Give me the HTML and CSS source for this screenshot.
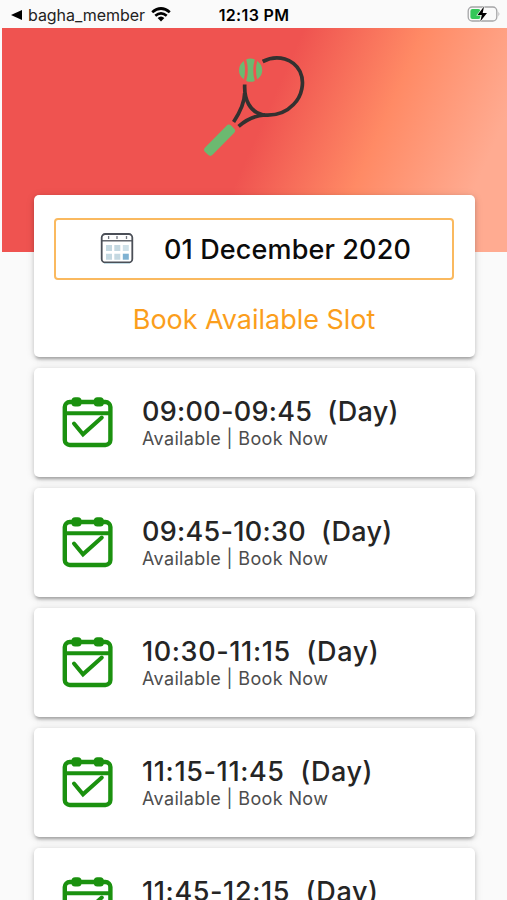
FILE: index.html
```html
<!DOCTYPE html>
<html lang="en">
<head>
<meta charset="utf-8">
<title>Book a slot</title>
<link rel="stylesheet" href="styles.css">
</head>
<body>
<svg class="defs" width="0" height="0" aria-hidden="true">
  <symbol id="booked" viewBox="0 0 52 52">
    <rect x="2.8" y="6" width="45.600" height="43" rx="5" fill="none" stroke="currentColor" stroke-width="4.4"/>
    <path d="M3 17.2H49" stroke="currentColor" stroke-width="4"/>
    <rect x="9.5" y="1.2" width="10" height="9.400" rx="3.6" fill="currentColor"/>
    <rect x="31.800" y="1.2" width="10" height="9.400" rx="3.6" fill="currentColor"/>
    <path d="M12 27.500L21 38.300L39.800 21.500" fill="none" stroke="currentColor" stroke-width="4" stroke-linecap="round" stroke-linejoin="miter"/>
  </symbol>
</svg>
<header class="status">
  <div class="status-left">
    <svg class="back" viewBox="0 0 11 10"><path d="M0 5L11 0V10Z"/></svg>
    <span class="app">bagha_member</span>
    <svg class="wifi" viewBox="0 0 20 15"><path d="M1.2 5.3Q10-2.3 18.8 5.3M4.3 8.7Q10 3.9 15.7 8.7" fill="none" stroke="#000" stroke-width="2.7"/><path d="M6.6 11.1Q10 8.1 13.4 11.1L10 14.6Z"/></svg>
  </div>
  <span class="clock">12:13 PM</span>
  <svg class="battery" viewBox="0 0 34 18">
    <rect x="1.2" y="2" width="28.6" height="14" rx="4" fill="none" stroke="#a5a5a7" stroke-width="1.3"/>
    <path d="M31.5 6.5Q33.3 9 31.5 11.500Z" fill="#a5a5a7"/>
    <rect x="3.4" y="4" width="10" height="10" rx="2" fill="#34c759"/>
    <path d="M17 1.500L10.500 10H14.800L13.300 16.500L20 8H15.700Z" stroke="#fafafa" stroke-width="1.200" paint-order="stroke"/>
  </svg>
</header>
<section class="hero">
  <svg class="racket" viewBox="200 50 110 112">
    <g fill="none" stroke="#333130" stroke-width="3.7">
      <path d="M263.700 61.500C279 53.500 295 59.500 301 71.500C306 82 303 96.500 294.500 104.500C286 113.500 275 116 263.500 114.800C251 111.500 245 100 245.700 84.500"/>
      <path d="M245.700 93C245.500 103 240.500 113 234.600 122"/>
      <path d="M239.600 126.300C247 120 256.500 115.500 266 114.800"/>
    </g>
    <g fill="#6cb970">
      <rect x="202" y="135" width="37" height="10.500" rx="3.200" transform="rotate(-45.500 220.500 140.200)"/>
      <path d="M247.200 59.400Q251.500 57.700 255.800 59.400Q252.600 70 255.800 80.900Q251.500 82.600 247.200 80.900Q250.400 70 247.200 59.400Z"/>
      <path d="M244.800 61Q240 64.500 240 70.200Q240 76 244.800 79.200Q247.200 70 244.800 61Z"/>
      <path d="M258.200 61Q263.200 64.500 263.200 70.200Q263.200 76 258.200 79.200Q255.800 70 258.200 61Z"/>
    </g>
  </svg>
</section>
<main class="content">
  <section class="card picker">
    <div class="date-box">
      <svg class="cal" viewBox="0 0 34 34">
        <rect x="1.700" y="2" width="30.600" height="28.500" rx="3.500" fill="#fff" stroke="#4b4f57" stroke-width="1.800"/>
        <path d="M2 8.800H32" stroke="#4b4f57" stroke-width="1.300"/>
        <path d="M4 31.500H30" stroke="#c3dbe4" stroke-width="1"/>
        <path d="M8.600 4V7M17 4V7M26.500 4V7" stroke="#737780" stroke-width="1.300"/>
        <path d="M6 13h6v6h-6zM14.300 13h6v6h-6zM6 21.700h6v6h-6zM14.300 21.700h6v6h-6z" fill="#c4d8e1"/>
        <path d="M22.800 13h6v6h-6z" fill="#cfe1e9"/>
        <path d="M22.800 21.700h6v6h-6z" fill="#7fb2d2"/>
      </svg>
      <span class="date">01 December 2020</span>
    </div>
    <h1 class="title">Book Available Slot</h1>
  </section>
  <article class="card slot"><svg class="icon"><use href="#booked"/></svg><div><h2 class="time wide">09:00-09:45  (Day)</h2><p class="state">Available | Book Now</p></div></article>
  <article class="card slot"><svg class="icon"><use href="#booked"/></svg><div><h2 class="time wide">09:45-10:30  (Day)</h2><p class="state">Available | Book Now</p></div></article>
  <article class="card slot"><svg class="icon"><use href="#booked"/></svg><div><h2 class="time">10:30-11:15  (Day)</h2><p class="state">Available | Book Now</p></div></article>
  <article class="card slot"><svg class="icon"><use href="#booked"/></svg><div><h2 class="time">11:15-11:45  (Day)</h2><p class="state">Available | Book Now</p></div></article>
  <article class="card slot"><svg class="icon"><use href="#booked"/></svg><div><h2 class="time">11:45-12:15  (Day)</h2><p class="state">Available | Book Now</p></div></article>
</main>
</body>
</html>
```
FILE: styles.css
```css
* { box-sizing: border-box; }
body {
  margin: 0;
  height: 900px;
  overflow: hidden;
  background: #fafafa;
  font-family: Inter, "Liberation Sans", sans-serif;
}
h1, h2, p { margin: 0; font-weight: 400; }
svg { display: block; flex: none; }
.defs { position: absolute; }

.status {
  display: grid;
  grid-template-columns: 1fr auto 1fr;
  align-items: center;
  height: 28px;
  padding: 2px 6px 0 11px;
}
.status-left { display: flex; align-items: center; }
.back { width: 11px; height: 10px; }
.app { margin-left: 6px; font-size: 16px; line-height: 20px; letter-spacing: -0.05px; color: #222; }
.wifi { width: 20px; height: 15px; margin-left: 6px; margin-top: -2px; }
.clock { margin-right: 4px; font-size: 16px; line-height: 20px; font-weight: 600; letter-spacing: 0.35px; }
.battery { width: 34px; height: 18px; justify-self: end; margin-top: -2px; }

.hero {
  display: flex;
  justify-content: center;
  height: 224px;
  margin-left: 2px;
  padding-top: 22px;
  background: linear-gradient(113.9deg, #ef5350 50%, #ff8a65 70%, #ffab91 90%);
}
.racket { width: 110px; height: 112px; margin-right: 1px; }

.content {
  position: relative;
  display: flex;
  flex-direction: column;
  gap: 11px;
  margin: -57px 32px 0 34px;
}
.card {
  background: #fff;
  border-radius: 5px;
  box-shadow: 0 4px 3px -2px rgba(0, 0, 0, 0.2), 0 2px 4px rgba(0, 0, 0, 0.14), 0 1px 8px rgba(0, 0, 0, 0.12);
}
.picker { height: 162px; padding: 23px 21px 0 20px; }
.date-box {
  display: flex;
  align-items: center;
  height: 62px;
  padding-left: 44px;
  border: 2px solid #fab95f;
  border-radius: 4px;
}
.cal { width: 34px; height: 34px; }
.date { margin: 2px 0 0 30px; font-size: 27px; line-height: 34px; font-weight: 500; letter-spacing: 0.13px; white-space: nowrap; color: #0b0b0b; }
.title { margin-top: 22px; font-size: 27px; line-height: 36px; text-align: center; letter-spacing: -0.03px; color: #fb9e1c; }
.slot {
  display: flex;
  align-items: flex-start;
  height: 109px;
  padding: 28px 0 0 28px;
}
.icon { width: 52px; height: 52px; color: #1b910f; }
.slot div { margin: 0 0 0 28px; }
.time { font-size: 27px; line-height: 31px; font-weight: 500; letter-spacing: 0.6px; white-space: pre; color: #252525; }
.time.wide { letter-spacing: 0.3px; }
.state { font-size: 18px; line-height: 24px; color: #4d4d4d; letter-spacing: 0.35px; }
```
